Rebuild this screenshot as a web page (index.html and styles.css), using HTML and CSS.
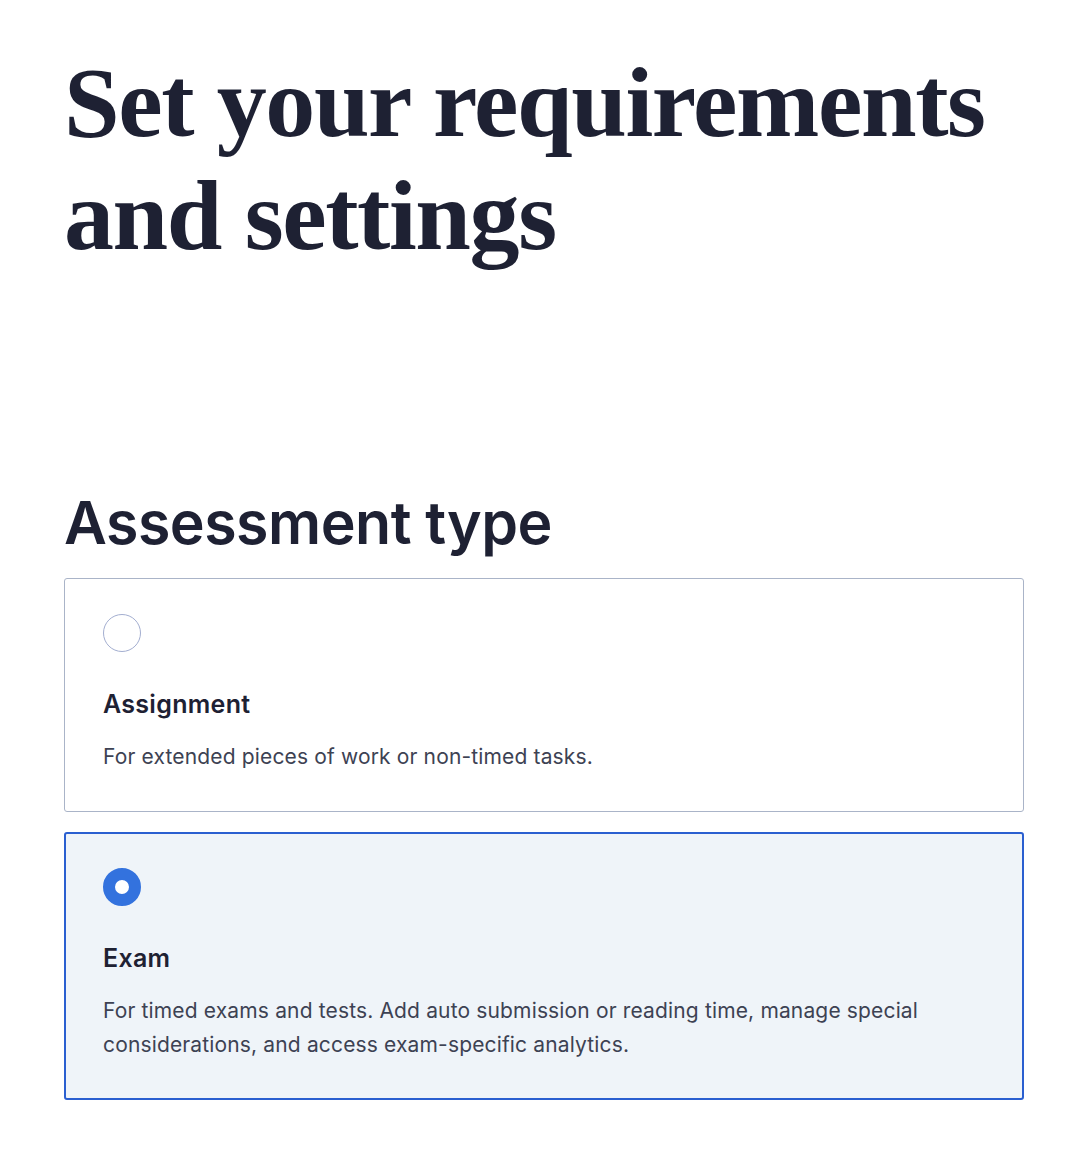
FILE: index.html
```html
<!DOCTYPE html>
<html lang="en">
<head>
    <meta charset="UTF-8">
    <meta name="viewport" content="width=device-width, initial-scale=1.0">
    <title>Set your requirements and settings</title>
    <link rel="stylesheet" href="styles.css">
</head>
<body>
    <div class="page">
        <h1 class="page-title">Set your requirements and settings</h1>

        <h2 class="section-title">Assessment type</h2>
        <div class="options">
            <label class="option">
                <span class="radio"></span>
                <span class="option-title">Assignment</span>
                <span class="option-desc">For extended pieces of work or non-timed tasks.</span>
            </label>
            <label class="option selected">
                <span class="radio"></span>
                <span class="option-title">Exam</span>
                <span class="option-desc">For timed exams and tests. Add auto submission or reading time, manage special considerations, and access exam-specific analytics.</span>
            </label>
        </div>
    </div>
</body>
</html>
```

FILE: styles.css
```css
body {
    margin: 0;
    background-color: #ffffff;
    color: #1e2133;
    font-family: Inter, "Noto Sans", sans-serif;
}
.page {
    width: 960px;
    padding: 46px 0 40px 64px;
}
.page-title {
    font-family: "Liberation Serif", serif;
    font-weight: 700;
    font-size: 100px;
    line-height: 113px;
    letter-spacing: -1.4px;
    margin: 0;
    width: 940px;
}
.section-title {
    font-size: 59px;
    font-weight: 600;
    line-height: 70px;
    margin: 216px 0 20px 0;
    letter-spacing: -0.5px;
}
.options {
    display: flex;
    flex-direction: column;
    gap: 20px;
}
.option {
    display: flex;
    flex-direction: column;
    border: 1px solid #aab4c8;
    border-radius: 3px;
    padding: 35px 38px 37px 38px;
    cursor: pointer;
}
.option.selected {
    border: 2px solid #2a5fd0;
    background-color: #eff4f9;
    padding: 34px 37px 36px 37px;
}
.radio {
    width: 36px;
    height: 36px;
    border: 1px solid #a3aed0;
    border-radius: 50%;
    background-color: #ffffff;
    box-sizing: content-box;
}
.option.selected .radio {
    width: 14px;
    height: 14px;
    border: 12px solid #3372de;
}
.option-title {
    font-size: 25px;
    font-weight: 600;
    letter-spacing: 0.3px;
    margin-top: 36px;
    line-height: 32px;
}
.option-desc {
    font-size: 21px;
    line-height: 34px;
    letter-spacing: 0.15px;
    color: #3d4253;
    margin-top: 20px;
}
```
